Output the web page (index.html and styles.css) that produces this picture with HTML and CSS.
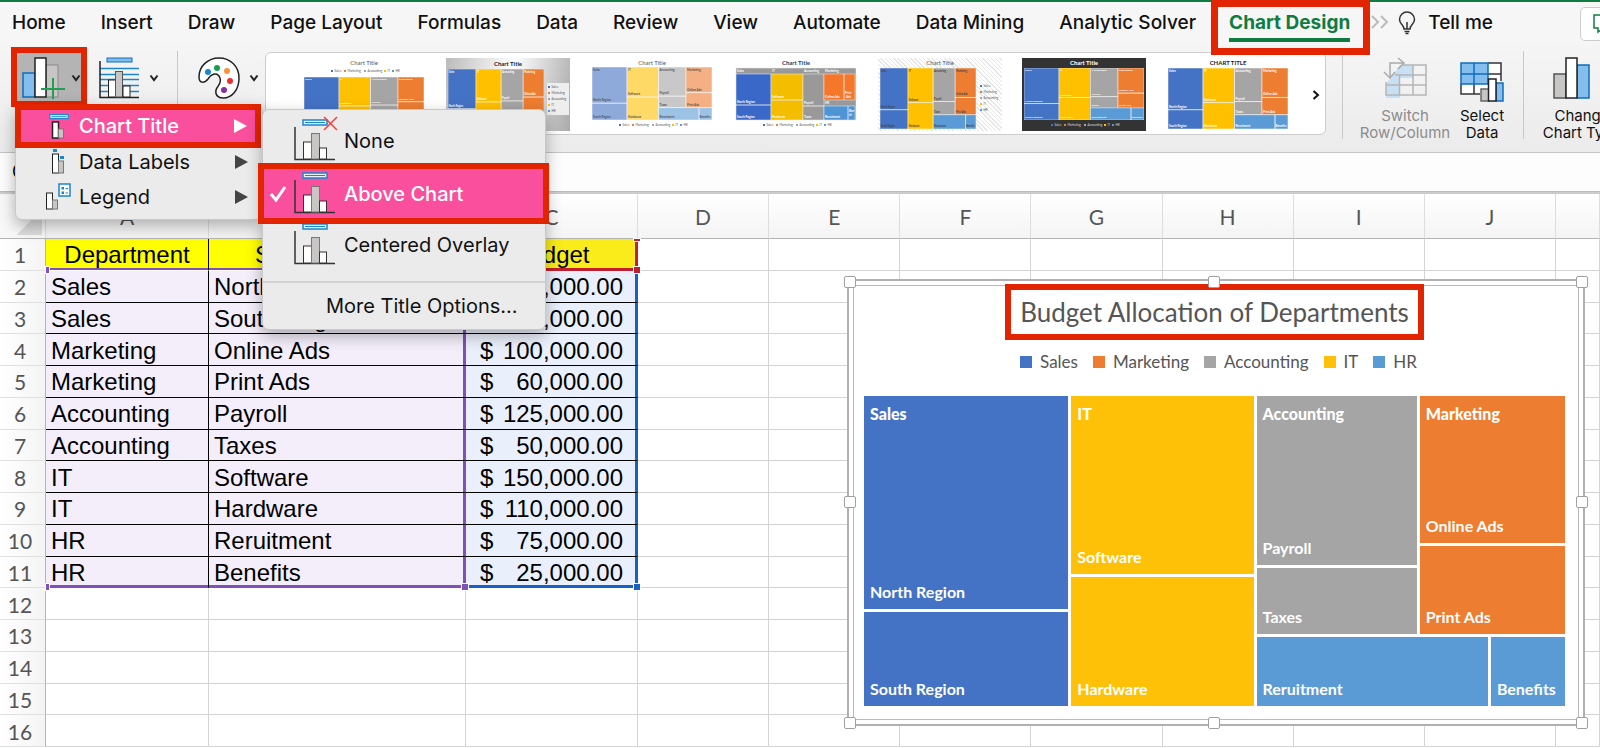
FILE: index.html
```html
<!DOCTYPE html>
<html lang="en">

<head>
    <meta charset="UTF-8">
    <meta name="viewport" content="width=device-width, initial-scale=1.0">
    <title>Budget Allocation</title>
    <link rel="stylesheet" href="styles.css">
</head>

<body>
    <!-- shared icon shapes -->
    <svg class="defs" width="0" height="0" aria-hidden="true">
        <symbol id="chevron" viewBox="0 0 10 8"><path d="M1.5 1.5 L5 6 L8.5 1.5" fill="none" stroke="#222" stroke-width="2"/></symbol>
        <symbol id="bars" viewBox="0 0 42 44">
            <path d="M1 8V40.500H41" fill="none" stroke="#333" stroke-width="1.500"/>
            <rect x="9.500" y="23" width="8" height="17" fill="#fff" stroke="#333"/>
            <rect x="17.500" y="14.500" width="8" height="25.500" fill="#c8c6c4" stroke="#777"/>
            <rect x="25.500" y="29" width="7" height="11" fill="#fff" stroke="#333"/>
        </symbol>
        <symbol id="title-box" viewBox="0 0 26 7">
            <rect x="1" y="1" width="24" height="5" fill="#e6f3fb" stroke="#1a86cc" stroke-width="1.500"/>
            <path d="M3 3.500H23" stroke="#1a86cc"/>
        </symbol>
        <symbol id="legend-row" viewBox="0 0 70 6">
            <g font-size="3" fill="currentColor">
                <rect x="1" y="2" width="2" height="2" fill="#4472c4"/><text x="4.500" y="4">Sales</text>
                <rect x="14" y="2" width="2" height="2" fill="#ed7d31"/><text x="17.500" y="4">Marketing</text>
                <rect x="34" y="2" width="2" height="2" fill="#a5a5a5"/><text x="37.500" y="4">Accounting</text>
                <rect x="54" y="2" width="2" height="2" fill="#ffc000"/><text x="57.500" y="4">IT</text>
                <rect x="62" y="2" width="2" height="2" fill="#5b9bd5"/><text x="65.500" y="4">HR</text>
            </g>
        </symbol>
        <symbol id="legend-col" viewBox="0 0 22 32">
            <g font-size="3" fill="currentColor">
                <rect x="1" y="2" width="2" height="2" fill="#4472c4"/><text x="4.500" y="4">Sales</text>
                <rect x="1" y="8" width="2" height="2" fill="#ed7d31"/><text x="4.500" y="10">Marketing</text>
                <rect x="1" y="14" width="2" height="2" fill="#a5a5a5"/><text x="4.500" y="16">Accounting</text>
                <rect x="1" y="20" width="2" height="2" fill="#ffc000"/><text x="4.500" y="22">IT</text>
                <rect x="1" y="26" width="2" height="2" fill="#5b9bd5"/><text x="4.500" y="28">HR</text>
            </g>
        </symbol>
        <symbol id="tree" viewBox="0 0 120 60" preserveAspectRatio="none">
            <g stroke="#fff" stroke-width=".5">
                <path d="M0 0H35V41H0ZM0 41H35V60H0Z" fill="#4472c4"/>
                <path d="M35 0H66.500V34H35ZM35 34H66.500V60H35Z" fill="#ffc000"/>
                <path d="M66.500 0H94V33H66.500ZM66.500 33H94V46H66.500Z" fill="#a5a5a5"/>
                <path d="M94 0H120V29H94ZM94 29H120V46H94Z" fill="#ed7d31"/>
                <path d="M66.500 46H107V60H66.500ZM107 46H120V60H107Z" fill="#5b9bd5"/>
            </g>
        </symbol>
        <symbol id="tree-text" viewBox="0 0 120 60" preserveAspectRatio="none">
            <g font-size="3" font-weight="bold">
                <text x="1" y="4">Sales</text><text x="1" y="39">North Region</text><text x="1" y="58">South Region</text>
                <text x="36" y="4">IT</text><text x="36" y="32">Software</text><text x="36" y="58">Hardware</text>
                <text x="67.500" y="4">Accounting</text><text x="67.500" y="31">Payroll</text><text x="67.500" y="44">Taxes</text>
                <text x="95" y="4">Marketing</text><text x="95" y="27">Online Ads</text><text x="95" y="44">Print Ads</text>
                <text x="67.500" y="58">Reruitment</text><text x="107.500" y="58">Benefits</text>
            </g>
        </symbol>
    </svg>

    <nav class="tabs">
        <a href="#">Home</a>
        <a href="#">Insert</a>
        <a href="#">Draw</a>
        <a href="#">Page Layout</a>
        <a href="#">Formulas</a>
        <a href="#">Data</a>
        <a href="#">Review</a>
        <a href="#">View</a>
        <a href="#">Automate</a>
        <a href="#">Data Mining</a>
        <a href="#">Analytic Solver</a>
        <a href="#" class="active marked"><span>Chart Design</span></a>
        <svg class="more" width="18" height="14" viewBox="0 0 18 14"><path d="M1 1L7 7L1 13M10 1L16 7L10 13" fill="none" stroke="#bbb" stroke-width="2"/></svg>
        <svg class="bulb" width="18" height="24" viewBox="0 0 18 24" fill="none" stroke="#333" stroke-width="1.500">
            <path d="M6 18C6 14 1.500 13 1.500 8.500A7.500 7.500 0 0 1 16.500 8.500C16.500 13 12 14 12 18ZM6.500 20.500H11.500M7.500 22.500H10.500M9 18V11"/>
        </svg>
        <a href="#">Tell me</a>
        <button class="comments" aria-label="Comments">
            <svg width="22" height="20" viewBox="0 0 22 20"><path d="M1 1H20V14H11L5 18V14H1Z" fill="none" stroke="#107c41" stroke-width="1.500"/></svg>
        </button>
    </nav>

    <div class="ribbon">
        <button class="tool add-element marked" aria-label="Add Chart Element">
            <svg width="44" height="42" viewBox="0 0 44 42">
                <rect x="1" y="16" width="12" height="24" fill="#83beec" stroke="#0f6cbd" stroke-width="1.500"/>
                <rect x="24" y="8" width="12" height="32" fill="#c8c6c4" stroke="#888"/>
                <rect x="13" y="1" width="11" height="39" fill="#fff" stroke="#222" stroke-width="1.500"/>
                <path d="M19 32H43M31 21V42" stroke="#21a055" stroke-width="2"/>
            </svg>
            <svg width="10" height="8"><use href="#chevron"/></svg>
        </button>
        <button class="tool layout" aria-label="Quick Layout">
            <svg width="41" height="42" viewBox="0 0 41 42">
                <rect x="8" y="1" width="25" height="4" fill="#83beec" stroke="#0f6cbd"/>
                <path d="M1 11.500H40M1 17.500H40M1 22.500H40M1 28.500H40M1 34.500H40" stroke="#1a86cc" stroke-width="1.500"/>
                <path d="M1 4V40.500H40" fill="none" stroke="#222" stroke-width="1.500"/>
                <rect x="9.500" y="23" width="7" height="17" fill="#fff" stroke="#222"/>
                <rect x="16.500" y="14.500" width="7" height="25.500" fill="#c8c6c4" stroke="#555"/>
                <rect x="24" y="29" width="7" height="11" fill="#fff" stroke="#222"/>
            </svg>
            <svg width="10" height="8"><use href="#chevron"/></svg>
        </button>
        <span class="divider"></span>
        <button class="tool colors" aria-label="Change Colors">
            <svg width="42" height="42" viewBox="0 0 42 42">
                <path d="M21 1C32 1 41 9 41 21C41 33 34 41 25 41C20 41 17 38 18 33C19 29 24 27 22 21C20 15 14 16 10 22C7 26 1 27 1 20C1 9 10 1 21 1Z" fill="#fff" stroke="#222" stroke-width="1.500"/>
                <circle cx="10" cy="15" r="3" fill="#1a86cc"/><circle cx="19" cy="11" r="3" fill="#13a04a"/>
                <circle cx="29" cy="14" r="3" fill="#f7933a"/><circle cx="32" cy="24" r="3" fill="#e8312f"/><circle cx="26" cy="33" r="3" fill="#8a2da5"/>
            </svg>
            <svg width="10" height="8"><use href="#chevron"/></svg>
        </button>

        <div class="gallery">
            <button aria-label="Style 1"><svg viewBox="0 0 124 73">
                <text x="62" y="7" class="thumb-title light">Chart Title</text>
                <use href="#legend-row" x="28" y="10" width="70" height="6"/>
                <use href="#tree" x="2" y="19" width="120" height="51"/><use href="#tree-text" x="2" y="19" width="120" height="51" fill="#fff"/>
            </svg></button>
            <button aria-label="Style 2" class="silver"><svg viewBox="0 0 124 73">
                <text x="62" y="8" class="thumb-title">Chart Title</text>
                <use href="#tree" x="2" y="11" width="96" height="58"/><use href="#tree-text" x="2" y="11" width="96" height="58" fill="#fff"/>
                <rect x="101" y="25" width="22" height="32" fill="#eee"/>
                <use href="#legend-col" x="101" y="26" width="22" height="32"/>
            </svg></button>
            <button aria-label="Style 3"><svg viewBox="0 0 124 73">
                <text x="62" y="7" class="thumb-title light">Chart Title</text>
                <use href="#tree" x="2" y="9" width="120" height="53" opacity=".6"/><use href="#tree-text" x="2" y="9" width="120" height="53" fill="#555"/>
                <use href="#legend-row" x="28" y="64" width="70" height="6"/>
            </svg></button>
            <button aria-label="Style 4"><svg viewBox="0 0 124 73">
                <text x="62" y="7" class="thumb-title navy">Chart Title</text>
                <g stroke="#eee" stroke-width=".500">
                    <path d="M2 10H122V62H2Z" fill="#999"/>
                    <path d="M2 16H37V47H2ZM2 47H37V62H2Z" fill="#3a68c8"/>
                    <path d="M37 16H69V42H37ZM37 42H69V62H37Z" fill="#f5bd00"/>
                    <path d="M69 16H90V48H69ZM69 48H90V62H69Z" fill="#999"/>
                    <path d="M90 16H110V42H90ZM110 16H121V42H110Z" fill="#f4772a"/>
                    <path d="M90 48H114V62H90ZM114 48H121V62H114Z" fill="#4f95d6"/>
                </g>
                <g font-size="3" font-weight="bold" fill="#fff">
                    <text x="3" y="14">Sales</text><text x="38" y="14">IT</text><text x="70" y="14">Accounting</text><text x="91" y="14">Marketing</text>
                    <text x="3" y="45">North Region</text><text x="3" y="60">South Region</text><text x="38" y="40">Software</text><text x="38" y="60">Hardware</text>
                    <text x="70" y="46">Payroll</text><text x="70" y="60">Taxes</text><text x="91" y="40">Online Ads</text><text x="111" y="36">Print</text><text x="112" y="40">Ads</text>
                    <text x="91" y="46">HR</text><text x="91" y="60">Reruitment</text><text x="115" y="54">Ben</text><text x="115" y="58">ef.</text>
                </g>
                <use href="#legend-row" x="28" y="64" width="70" height="6"/>
            </svg></button>
            <button aria-label="Style 5" class="hatched"><svg viewBox="0 0 124 73">
                <text x="62" y="7" class="thumb-title light">Chart Title</text>
                <use href="#tree" x="2" y="10" width="96" height="61"/><use href="#tree-text" x="2" y="10" width="96" height="61" fill="#444"/>
                <use href="#legend-col" x="101" y="25" width="22" height="32"/>
            </svg></button>
            <button aria-label="Style 6" class="dark"><svg viewBox="0 0 124 73">
                <text x="62" y="7" class="thumb-title white">Chart Title</text>
                <use href="#tree" x="2" y="10" width="120" height="52"/><use href="#tree-text" x="2" y="10" width="120" height="52" fill="#fff"/>
                <use href="#legend-row" x="28" y="64" width="70" height="6"/>
            </svg></button>
            <button aria-label="Style 7"><svg viewBox="0 0 124 73">
                <text x="62" y="7" class="thumb-title">CHART TITLE</text>
                <use href="#tree" x="2" y="10" width="120" height="61"/><use href="#tree-text" x="2" y="10" width="120" height="61" fill="#fff"/>
            </svg></button>
            <button class="next" aria-label="More styles"><svg width="8" height="10" viewBox="0 0 8 10"><path d="M1.500 1L6 5L1.500 9" fill="none" stroke="#111" stroke-width="2"/></svg></button>
        </div>

        <div class="data-tools">
            <span class="divider"></span>
            <button class="big switch" disabled>
                <svg width="44" height="42" viewBox="0 0 44 42" fill="none">
                    <path d="M3 26L17 12V41H3ZM17 8H30V21H8Z" fill="#c7e0f4"/>
                    <path d="M20 8H43V38H3V25M3 28H43M12 18H43M16.500 18V38M30 8V38" stroke="#b5b5b5" stroke-width="1.500"/>
                    <path d="M7 20V6H20M15 1L21 6L15 12M1 15L7 21L12 15" stroke="#aaa" stroke-width="1.500"/>
                </svg>
                Switch<br>Row/Column
            </button>
            <button class="big select">
                <svg width="44" height="42" viewBox="0 0 44 42">
                    <path d="M1 6H28V27H1Z" fill="#83beec"/><path d="M28 6H41V27H28ZM1 27H28V37H1Z" fill="#fff"/>
                    <path d="M28 6H41V24M28 17H41M1 27V37H20M14 27V37" stroke="#333" stroke-width="1.500" fill="none"/>
                    <path d="M1 6H28V27H1ZM1 17H28M14 6V27" stroke="#0f6cbd" stroke-width="1.500" fill="none"/>
                    <rect x="21" y="32" width="8" height="12" fill="#c8c6c4" stroke="#666" stroke-width="1.500"/>
                    <rect x="36" y="26" width="7" height="18" fill="#83beec" stroke="#0f6cbd" stroke-width="1.500"/>
                    <rect x="28.500" y="22" width="7.500" height="22" fill="#fff" stroke="#222" stroke-width="1.500"/>
                </svg>
                Select<br>Data
            </button>
            <span class="divider"></span>
            <button class="big change">
                <svg width="66" height="42" viewBox="0 0 66 42">
                    <rect x="5" y="17" width="12" height="24" fill="#c8c6c4" stroke="#555" stroke-width="1.500"/>
                    <rect x="28" y="8" width="12" height="33" fill="#83beec" stroke="#0f6cbd" stroke-width="1.500"/>
                    <rect x="17" y="1" width="11" height="40" fill="#fff" stroke="#222" stroke-width="1.500"/>
                    <use href="#chevron" x="55" y="18" width="10" height="8"/>
                </svg>
                Change<br>Chart Type
            </button>
        </div>
    </div>

    <div class="formula-bar">
        <input type="text" aria-label="Name Box" value="Chart 1">
    </div>

    <main class="sheet">
        <table>
            <colgroup>
                <col class="col-num"><col class="col-a"><col class="col-b"><col class="col-c">
                <col><col><col><col><col><col><col><col class="col-k">
            </colgroup>
            <thead>
                <tr><th class="corner"></th><th>A</th><th>B</th><th>C</th><th>D</th><th>E</th><th>F</th><th>G</th><th>H</th><th>I</th><th>J</th><th></th></tr>
            </thead>
            <tbody>
                <tr class="titles"><th>1</th><td>Department<i class="handle purple left"></i></td><td>Subdepartment</td><td class="budget">Budget<i class="handle red top"></i><i class="handle red"></i></td><td></td><td></td><td></td><td></td><td></td><td></td><td></td><td></td></tr>
                <tr class="data"><th>2</th><td>Sales</td><td>North Region</td><td><span>$</span>200,000.00</td><td></td><td></td><td></td><td></td><td></td><td></td><td></td><td></td></tr>
                <tr class="data"><th>3</th><td>Sales</td><td>South Region</td><td><span>$</span>90,000.00</td><td></td><td></td><td></td><td></td><td></td><td></td><td></td><td></td></tr>
                <tr class="data"><th>4</th><td>Marketing</td><td>Online Ads</td><td><span>$</span>100,000.00</td><td></td><td></td><td></td><td></td><td></td><td></td><td></td><td></td></tr>
                <tr class="data"><th>5</th><td>Marketing</td><td>Print Ads</td><td><span>$</span>60,000.00</td><td></td><td></td><td></td><td></td><td></td><td></td><td></td><td></td></tr>
                <tr class="data"><th>6</th><td>Accounting</td><td>Payroll</td><td><span>$</span>125,000.00</td><td></td><td></td><td></td><td></td><td></td><td></td><td></td><td></td></tr>
                <tr class="data"><th>7</th><td>Accounting</td><td>Taxes</td><td><span>$</span>50,000.00</td><td></td><td></td><td></td><td></td><td></td><td></td><td></td><td></td></tr>
                <tr class="data"><th>8</th><td>IT</td><td>Software</td><td><span>$</span>150,000.00</td><td></td><td></td><td></td><td></td><td></td><td></td><td></td><td></td></tr>
                <tr class="data"><th>9</th><td>IT</td><td>Hardware</td><td><span>$</span>110,000.00</td><td></td><td></td><td></td><td></td><td></td><td></td><td></td><td></td></tr>
                <tr class="data"><th>10</th><td>HR</td><td>Reruitment</td><td><span>$</span>75,000.00</td><td></td><td></td><td></td><td></td><td></td><td></td><td></td><td></td></tr>
                <tr class="data last"><th>11</th><td>HR<i class="handle purple left"></i></td><td>Benefits<i class="handle purple"></i></td><td><span>$</span>25,000.00<i class="handle blue"></i></td><td></td><td></td><td></td><td></td><td></td><td></td><td></td><td></td></tr>
                <tr><th>12</th><td></td><td></td><td></td><td></td><td></td><td></td><td></td><td></td><td></td><td></td><td></td></tr>
                <tr><th>13</th><td></td><td></td><td></td><td></td><td></td><td></td><td></td><td></td><td></td><td></td><td></td></tr>
                <tr><th>14</th><td></td><td></td><td></td><td></td><td></td><td></td><td></td><td></td><td></td><td></td><td></td></tr>
                <tr><th>15</th><td></td><td></td><td></td><td></td><td></td><td></td><td></td><td></td><td></td><td></td><td></td></tr>
                <tr><th>16</th><td></td><td></td><td></td><td></td><td></td><td></td><td></td><td></td><td></td><td></td><td></td></tr>
            </tbody>
        </table>

        <section class="chart">
            <div class="chart-inner">
                <h2 class="marked">Budget Allocation of Departments</h2>
                <ul class="legend">
                    <li class="sales">Sales</li>
                    <li class="marketing">Marketing</li>
                    <li class="accounting">Accounting</li>
                    <li class="it">IT</li>
                    <li class="hr">HR</li>
                </ul>
                <div class="treemap">
                    <div class="stack sales-stack">
                        <div class="sales"><b>Sales</b><span>North Region</span></div>
                        <div class="sales"><span>South Region</span></div>
                    </div>
                    <div class="stack it-stack">
                        <div class="it"><b>IT</b><span>Software</span></div>
                        <div class="it"><span>Hardware</span></div>
                    </div>
                    <div class="rest">
                        <div class="rest-top">
                            <div class="stack accounting-stack">
                                <div class="accounting"><b>Accounting</b><span>Payroll</span></div>
                                <div class="accounting"><span>Taxes</span></div>
                            </div>
                            <div class="stack marketing-stack">
                                <div class="marketing"><b>Marketing</b><span>Online Ads</span></div>
                                <div class="marketing"><span>Print Ads</span></div>
                            </div>
                        </div>
                        <div class="hr-row">
                            <div class="hr"><span>Reruitment</span></div>
                            <div class="hr"><span>Benefits</span></div>
                        </div>
                    </div>
                </div>
            </div>
            <i class="grip nw"></i><i class="grip n"></i><i class="grip ne"></i>
            <i class="grip w"></i><i class="grip e"></i>
            <i class="grip sw"></i><i class="grip s"></i><i class="grip se"></i>
        </section>
    </main>

    <div class="menu elements-menu">
        <button class="hot marked">
            <svg width="26" height="28" viewBox="0 0 26 28"><use href="#title-box" x="4" y="1" width="20" height="7"/><rect x="7.500" y="10" width="6" height="16" fill="#fff" stroke="#222" stroke-width="1.500"/><rect x="13.500" y="17" width="5" height="9" fill="#c8c6c4" stroke="#777"/></svg>
            Chart Title<em></em>
        </button>
        <button>
            <svg width="26" height="28" viewBox="0 0 26 28"><path d="M8 1H12V4H8ZM15 8H19V11H15Z" fill="#1a86cc"/><rect x="7.500" y="6" width="6" height="19" fill="#fff" stroke="#222"/><rect x="13.500" y="13" width="5" height="12" fill="#c8c6c4" stroke="#777"/></svg>
            Data Labels<em></em>
        </button>
        <button>
            <svg width="26" height="28" viewBox="0 0 26 28"><rect x="14" y="1" width="11" height="12" fill="#fff" stroke="#1a86cc" stroke-width="1.500"/><path d="M16.500 4H19V6.500H16.500ZM16.500 8.500H19V11H16.500ZM20.500 5H23V6H20.500ZM20.500 9.500H23V10.500H20.500Z" fill="#1a86cc"/><rect x="1.500" y="10" width="6" height="16" fill="#fff" stroke="#222"/><rect x="7.500" y="17" width="5" height="9" fill="#c8c6c4" stroke="#777"/></svg>
            Legend<em></em>
        </button>
    </div>

    <div class="menu title-menu">
        <button>
            <svg width="42" height="44"><use href="#bars"/><use href="#title-box" x="8" y="0" width="26" height="7"/><path d="M30 -2L43 11M43 -2L30 11" stroke="#f04040" stroke-width="1.500"/></svg>
            None
        </button>
        <button class="hot marked">
            <svg class="check" width="18" height="18" viewBox="0 0 18 18"><path d="M2 9L7 15L16 2" fill="none" stroke="#fff" stroke-width="3"/></svg>
            <svg width="42" height="44"><use href="#bars"/><use href="#title-box" x="8" y="0" width="26" height="7"/></svg>
            Above Chart
        </button>
        <button>
            <svg width="42" height="44"><use href="#bars"/><use href="#title-box" x="8" y="0" width="26" height="7"/></svg>
            Centered Overlay
        </button>
        <hr>
        <button class="more-options">More Title Options...</button>
    </div>
</body>

</html>
```

FILE: styles.css
```css
* {
    box-sizing: border-box;
}

body {
    margin: 0;
    height: 100vh;
    display: flex;
    flex-direction: column;
    overflow: hidden;
    background: #fff;
    font-family: Inter, "Liberation Sans", sans-serif;
    color: #111;
}

button {
    font: inherit;
    color: inherit;
    background: none;
    border: none;
    padding: 0;
}

svg {
    display: block;
    flex: none;
}

.defs {
    position: absolute;
}

.marked {
    border: 6px solid #e32400;
}

/* tab strip */
.tabs {
    display: flex;
    align-items: flex-start;
    height: 45px;
    flex: none;
    padding-left: 12px;
    border-top: 2px solid #107c41;
    background: #f6f6f6;
    font-size: 19px;
    font-weight: 500;
    line-height: 42px;
    white-space: nowrap;
}

.tabs a {
    color: #111;
    text-decoration: none;
    margin-right: 35px;
}

.tabs .active {
    position: relative;
    z-index: 2;
    height: 55px;
    margin: -2px 0 0 -20px;
    padding: 0 13px 0 11px;
    border-width: 7px;
    line-height: 32px;
    font-weight: 700;
    color: #107c41;
}

.tabs .active span {
    display: block;
    height: 35px;
    border-bottom: 4px solid #107c41;
}

.more {
    margin: 13px 9px 0 1px;
}

.bulb {
    margin: 9px 12px 0 0;
}

.comments {
    width: 60px;
    height: 34px;
    flex: none;
    margin: 5px -40px 0 auto;
    padding-left: 12px;
    border: 1px solid #ccc;
    border-radius: 5px;
    background: #fff;
}

/* ribbon */
.ribbon {
    display: flex;
    align-items: flex-start;
    height: 108px;
    flex: none;
    padding-left: 11px;
    background: linear-gradient(#f5f5f5, #ebebeb);
    border-bottom: 1px solid #c4c4c4;
}

.tool {
    display: flex;
    align-items: center;
    flex: none;
    gap: 9px;
    height: 60px;
    margin-top: 2px;
    padding-top: 2px;
}

.add-element {
    width: 76px;
    gap: 5px;
    padding-left: 5px;
    background: #b4b4b4;
    overflow: hidden;
}

.layout {
    margin-left: 12px;
}

.divider {
    width: 1px;
    height: 88px;
    flex: none;
    margin-top: 6px;
    background: #c8c8c8;
}

.layout + .divider {
    margin-left: 18px;
    margin-right: 20px;
}

.gallery {
    display: flex;
    gap: 20px;
    flex: 1;
    height: 83px;
    margin: 7px 0 0 6px;
    padding: 5px 0 0 36px;
    background: #fff;
    border: 1px solid #ccc;
    border-radius: 6px;
    overflow: hidden;
}

.gallery button {
    width: 124px;
    height: 73px;
    flex: none;
    color: #555;
    font-family: Lato, sans-serif;
}

.gallery .silver {
    background: linear-gradient(100deg, #bbb, #fff 50%, #aaa);
}

.gallery .hatched {
    background: repeating-linear-gradient(45deg, #fff 0 2px, #e6e6e6 2px 3px);
}

.gallery .dark {
    background: #333;
    color: #ddd;
}

.gallery .next {
    width: 8px;
    margin-left: 2px;
}

.thumb-title {
    font-size: 6px;
    font-weight: 700;
    text-anchor: middle;
    fill: #222;
}

.thumb-title.light {
    font-weight: 400;
    fill: #555;
}

.thumb-title.navy {
    fill: #2f3e5c;
}

.thumb-title.white {
    fill: #fff;
}

.data-tools {
    display: flex;
    width: 274px;
    flex: none;
    padding-left: 16px;
    overflow: hidden;
}

.big {
    display: flex;
    flex: none;
    flex-direction: column;
    align-items: center;
    margin-top: 12px;
    font-size: 15px;
    line-height: 17px;
    white-space: nowrap;
}

.big svg {
    margin-bottom: 8px;
    overflow: visible;
}

.switch {
    width: 88px;
    margin-left: 18px;
    color: #8c8c8c;
}

.select {
    width: 46px;
    margin-left: 10px;
    margin-right: 18px;
}

.change {
    width: 80px;
    margin-left: 18px;
}

/* name box row */
.formula-bar {
    height: 39px;
    flex: none;
    background: #fdfdfd;
    border-bottom: 1px solid #bbb;
}

.formula-bar input {
    width: 200px;
    height: 36px;
    padding: 0 12px;
    border: none;
    background: none;
    font: 18px Inter, sans-serif;
}

/* sheet */
.sheet {
    position: relative;
    flex: 1;
    min-height: 0;
    padding-bottom: 1px;
    border-top: 2px solid #ccc;
}

.sheet table {
    width: 100%;
    height: 100%;
    table-layout: fixed;
    border-collapse: separate;
    border-spacing: 0;
    font-family: "Liberation Sans", Arial, sans-serif;
    font-size: 24px;
    line-height: 28px;
}

.col-num { width: 46px; }
.col-a { width: 163px; }
.col-b { width: 257px; }
.col-c { width: 172px; }
.col-k { width: 44px; }

.sheet th {
    padding: 2px 0 0;
    background: linear-gradient(90deg, #fff, #f4f4f4);
    border-right: 1px solid #b4b4b4;
    border-bottom: 1px solid #e0e0e0;
    font-family: Lato, sans-serif;
    font-size: 21px;
    font-weight: 400;
    color: #555;
}

.sheet tbody th {
    padding-right: 5px;
}

.sheet thead th {
    height: 45px;
    background: linear-gradient(#fff, #f4f4f4);
    border-right-color: #ddd;
    border-bottom-color: #b4b4b4;
}

.sheet .corner {
    background: linear-gradient(135deg, transparent 50%, #ddd 50%) 8px 24px / 34px 17px no-repeat, #f8f8f8;
}

.sheet td {
    position: relative;
    padding: 2px 0 0;
    border-right: 1px solid #d4d4d4;
    border-bottom: 1px solid #d4d4d4;
    white-space: nowrap;
    color: #000;
}

.titles td:nth-child(-n+4) {
    background: #ff0;
    text-align: center;
    border-right-color: #000;
}

.titles td:nth-child(-n+3) {
    box-shadow: inset 0 -2px #7f4fba;
    border-bottom-color: #fff;
}

.titles td.budget {
    background: #faec1a;
    border-color: #c0202e;
    box-shadow: inset -2px -2px #c0202e;
}

.data td:nth-child(-n+3) {
    padding-left: 5px;
    background: #f3eefa;
    border-bottom-color: #000;
}

.data td:nth-child(2) {
    border-right-color: #000;
}

.data td:nth-child(3) {
    border-right-color: #7f4fba;
    box-shadow: inset -2px 0 #7f4fba;
}

.data td:nth-child(4) {
    padding-right: 14px;
    background: #eaf0fb;
    border-bottom-color: #000;
    border-right-color: #1760c8;
    box-shadow: inset -2px 0 #1760c8;
    text-align: right;
}

.data td span {
    float: left;
    margin-left: 14px;
}

.last td:nth-child(2) {
    border-bottom-color: #7f4fba;
    box-shadow: inset 0 -2px #7f4fba;
}

.last td:nth-child(3) {
    border-bottom-color: #7f4fba;
    box-shadow: inset -2px -2px #7f4fba;
}

.last td:nth-child(4) {
    border-bottom-color: #1760c8;
    box-shadow: inset -2px -2px #1760c8;
}

.handle {
    position: absolute;
    z-index: 1;
    right: -4px;
    bottom: -4px;
    width: 8px;
    height: 8px;
    border: 1px solid #fff;
}

.handle.left {
    right: auto;
    left: -1px;
    width: 5px;
}

.handle.top {
    top: -1px;
    bottom: auto;
    height: 4px;
}

.purple { background: #7f4fba; }
.red { background: #c0202e; }
.blue { background: #1760c8; }

/* chart object */
.chart {
    position: absolute;
    z-index: 2;
    top: 85px;
    right: 15px;
    bottom: 22px;
    left: 847px;
    padding: 4px;
    background: #fff;
    border: 2px solid #b0b0b0;
    font-family: Lato, sans-serif;
    font-size: 17px;
}

.chart-inner {
    display: flex;
    flex-direction: column;
    align-items: center;
    height: 100%;
    padding: 0 13px 13px 10px;
    border: 1px solid #bbb;
}

.chart h2 {
    margin: -2px 0 0;
    padding: 0 9px;
    font-size: 26px;
    font-weight: 400;
    line-height: 44px;
    color: #555;
    white-space: nowrap;
}

.legend {
    display: flex;
    gap: 15px;
    margin: 11px 0 23px;
    padding: 0 0 0 8px;
    list-style: none;
    line-height: 22px;
    color: #555;
}

.legend li {
    display: flex;
    align-items: center;
    gap: 8px;
}

.legend li::before {
    content: "";
    width: 12px;
    height: 12px;
}

.treemap .sales, .legend .sales::before { background: #4472c4; }
.treemap .it, .legend .it::before { background: #ffc107; }
.treemap .accounting, .legend .accounting::before { background: #a5a5a5; }
.treemap .marketing, .legend .marketing::before { background: #ed7d31; }
.treemap .hr, .legend .hr::before { background: #5b9bd5; }

.treemap {
    display: grid;
    grid-template-columns: 204fr 182fr 308fr;
    gap: 3px;
    flex: 1;
    width: 100%;
    min-height: 0;
    color: #fff;
    font-size: 16px;
    font-weight: 700;
    line-height: 22px;
}

.stack, .rest, .rest-top, .hr-row {
    display: grid;
    gap: 3px;
}

.sales-stack { grid-template-rows: 213fr 94fr; }
.it-stack { grid-template-rows: 178fr 129fr; }
.rest { grid-template-rows: 238fr 69fr; }
.rest-top { grid-template-columns: 160fr 145fr; }
.accounting-stack { grid-template-rows: 169fr 66fr; }
.marketing-stack { grid-template-rows: 147fr 88fr; }
.hr-row { grid-template-columns: 231fr 74fr; }

.stack > div, .hr-row > div {
    display: flex;
    flex-direction: column;
    padding: 7px 6px 6px;
    white-space: nowrap;
}

.treemap span {
    margin-top: auto;
}

.grip {
    position: absolute;
    width: 12px;
    height: 12px;
    background: #fff;
    border: 1px solid #a0a0a0;
    border-radius: 2px;
}

.nw, .n, .ne { top: -5px; }
.sw, .s, .se { bottom: -5px; }
.nw, .w, .sw { left: -5px; }
.ne, .e, .se { right: -5px; }
.n, .s { left: calc(50% - 8px); }
.w, .e { top: calc(50% - 7px); }

/* drop-down menus */
.menu {
    position: absolute;
    z-index: 5;
    background: #ebebeb;
    border: 1px solid #c8c8c8;
    border-radius: 7px;
    box-shadow: 0 6px 16px rgba(0, 0, 0, 0.3);
    font-size: 20px;
    white-space: nowrap;
}

.menu button {
    display: flex;
    align-items: center;
    width: 100%;
}

.menu svg {
    overflow: visible;
}

.menu .hot {
    position: relative;
    background: #f94f9d;
    color: #fff;
    font-weight: 500;
}

.elements-menu {
    top: 104px;
    left: 15px;
    width: 248px;
    padding-bottom: 5px;
}

.elements-menu button {
    height: 35px;
    gap: 8px;
    padding: 0 14px 0 29px;
}

.elements-menu .hot {
    height: 44px;
    margin: -1px 0 -4px -1px;
    padding: 0 8px 0 24px;
}

.elements-menu em {
    margin-left: auto;
    border-left: 13px solid #444;
    border-top: 7px solid transparent;
    border-bottom: 7px solid transparent;
}

.elements-menu .hot em {
    border-left-color: #fff;
}

.title-menu {
    z-index: 6;
    top: 109px;
    left: 262px;
    width: 284px;
    padding-top: 5px;
}

.title-menu button {
    height: 52px;
    gap: 8px;
    padding-left: 31px;
}

.title-menu .hot {
    width: 291px;
    height: 61px;
    margin: -4px 0 -5px -5px;
    padding-left: 30px;
}

.check {
    position: absolute;
    left: 5px;
}

.title-menu hr {
    height: 2px;
    margin: 10px 0 0;
    border: none;
    background: #d2d2d2;
}

.title-menu .more-options {
    height: 46px;
    padding-left: 63px;
}
```
